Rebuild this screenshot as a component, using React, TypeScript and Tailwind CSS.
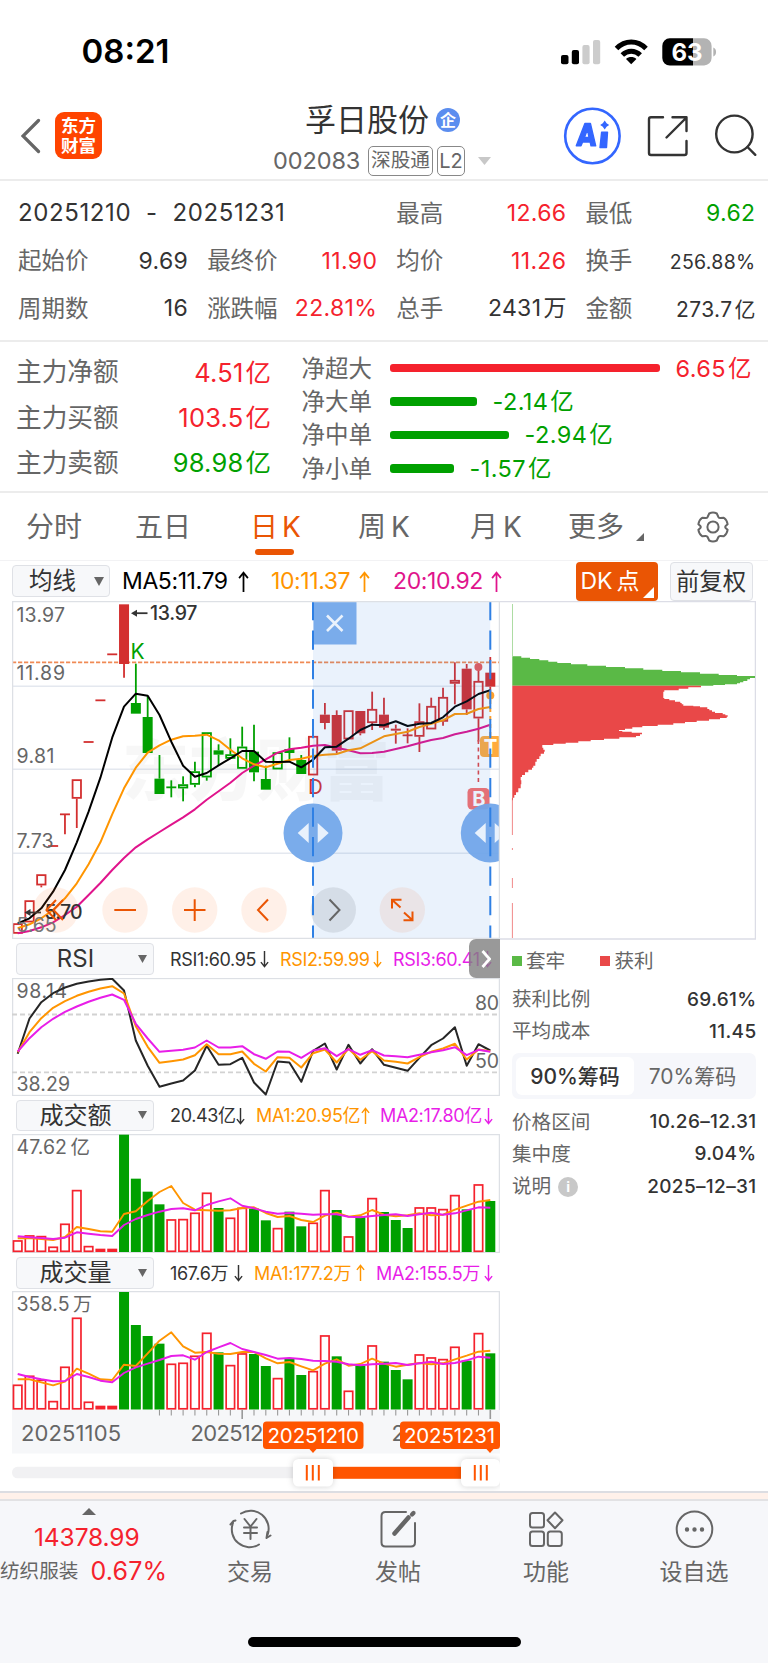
import React from "react";

type Pt = [number, number];

const X0 = 17.7;
const STEP = 11.815;
const cx = (i: number) => X0 + i * STEP;

const line = (ys: number[], top: number) =>
  ys.map((y, i) => `${cx(i).toFixed(1)},${(top + y / 3).toFixed(1)}`).join(" ");

/* kind: f = filled, h = hollow, d = dash; colour: r / g; [kind+colour, top, bottom, wickTop, wickBottom] */
type Candle = [string, number, number, number, number];
const candles: Candle[] = [
  ["hr", 985, 1016, 985, 1016],
  ["hr", 916, 982, 916, 982],
  ["hr", 838, 871, 838, 877],
  ["dr", 753, 753, 753, 753],
  ["dr", 658, 658, 658, 718],
  ["hr", 553, 611, 553, 699],
  ["dr", 441, 441, 441, 441],
  ["dr", 316, 316, 316, 316],
  ["dr", 178, 178, 178, 178],
  ["fr", 28, 207, 28, 248],
  ["fg", 324, 356, 206, 356],
  ["fg", 366, 474, 303, 474],
  ["fg", 551, 597, 480, 597],
  ["dg", 577, 577, 556, 607],
  ["hg", 568, 580, 544, 619],
  ["hg", 529, 569, 500, 577],
  ["hg", 412, 547, 412, 557],
  ["fg", 466, 479, 448, 510],
  ["hg", 478, 491, 430, 491],
  ["hg", 455, 521, 395, 521],
  ["fg", 470, 532, 389, 559],
  ["fg", 552, 584, 512, 584],
  ["hg", 472, 523, 472, 523],
  ["fg", 462, 474, 427, 500],
  ["fg", 495, 537, 480, 537],
  ["hr", 423, 541, 423, 541],
  ["fr", 359, 384, 324, 403],
  ["fr", 360, 467, 346, 475],
  ["hr", 346, 433, 346, 433],
  ["fr", 348, 415, 348, 421],
  ["hr", 342, 384, 290, 405],
  ["fr", 359, 398, 308, 404],
  ["fr", 401, 407, 389, 446],
  ["dr", 421, 421, 400, 445],
  ["hr", 379, 425, 325, 471],
  ["hr", 333, 403, 308, 403],
  ["hr", 306, 380, 278, 392],
  ["hr", 255, 266, 202, 328],
  ["fr", 221, 343, 207, 360],
  ["hr", 258, 370, 215, 440],
  ["fr", 233, 275, 186, 292],
];

const ma5 = [985, 970, 940, 890, 825, 742, 650, 548, 428, 335, 296, 302, 360, 440, 512, 545, 534, 511, 490, 468, 468, 500, 501, 500, 517, 494, 457, 455, 431, 405, 389, 391, 379, 393, 386, 384, 367, 335, 319, 297, 286];
const ma10 = [1000, 988, 970, 945, 910, 865, 808, 742, 658, 580, 518, 473, 451, 434, 424, 422, 419, 436, 464, 490, 508, 517, 506, 495, 491, 483, 479, 477, 466, 460, 442, 424, 417, 410, 396, 386, 376, 357, 356, 342, 336];
const ma20 = [1015, 1008, 997, 982, 960, 935, 900, 864, 825, 789, 757, 733, 711, 689, 667, 643, 614, 589, 563, 534, 512, 493, 473, 463, 458, 452, 450, 458, 466, 475, 474, 470, 462, 454, 444, 435, 429, 418, 410, 401, 389];

const rsi1 = [340, 234, 185, 158, 141, 130, 123, 118, 115, 150, 300, 376, 439, 429, 420, 390, 316, 373, 371, 352, 426, 462, 363, 366, 424, 331, 309, 387, 313, 369, 326, 373, 382, 391, 352, 314, 294, 260, 376, 311, 330];
const rsi2 = [335, 275, 233, 202, 182, 166, 154, 144, 137, 159, 257, 319, 367, 362, 357, 344, 311, 341, 341, 333, 370, 393, 350, 352, 381, 338, 327, 366, 325, 358, 332, 360, 364, 369, 350, 334, 324, 310, 357, 327, 332];
const rsi3 = [333, 293, 260, 235, 214, 198, 184, 172, 162, 178, 250, 294, 334, 331, 328, 321, 300, 321, 321, 317, 341, 355, 333, 334, 352, 330, 323, 347, 326, 343, 329, 345, 347, 350, 343, 335, 329, 320, 344, 328, 334];

const kinds = "rrrrrrrRRggggrrrrgrrggrggrrgrgrgggrrrrgrg";
const amount = [437, 422, 424, 456, 387, 286, 454, 461, 461, 119, 251, 290, 328, 374, 373, 354, 294, 339, 369, 339, 341, 376, 400, 350, 394, 384, 286, 345, 425, 364, 310, 351, 375, 399, 338, 338, 343, 301, 343, 269, 318];
const amountMa1 = [430, 429, 432, 435, 426, 396, 402, 409, 410, 357, 349, 318, 291, 273, 324, 344, 346, 347, 346, 339, 337, 354, 366, 363, 375, 381, 362, 353, 365, 361, 345, 359, 364, 361, 355, 361, 359, 344, 332, 320, 315];
const amountMa2 = [424, 427, 429, 432, 428, 412, 416, 420, 423, 390, 372, 360, 350, 342, 340, 346, 330, 319, 310, 332, 340, 350, 356, 354, 356, 359, 358, 358, 365, 367, 363, 360, 358, 363, 358, 353, 359, 355, 346, 337, 338];
const volume = [390, 363, 375, 439, 336, 189, 441, 452, 452, 111, 210, 243, 266, 327, 324, 303, 234, 292, 331, 296, 297, 333, 370, 309, 360, 349, 242, 304, 408, 331, 272, 320, 345, 373, 299, 308, 313, 276, 317, 235, 295];
const volumeMa1 = [373, 373, 382, 391, 380, 341, 356, 373, 375, 329, 333, 295, 257, 232, 274, 293, 291, 296, 297, 291, 291, 310, 325, 321, 334, 346, 326, 313, 332, 327, 311, 326, 335, 329, 324, 328, 325, 313, 302, 290, 287];
const volumeMa2 = [357, 366, 373, 379, 378, 357, 366, 377, 382, 354, 337, 326, 315, 303, 301, 314, 291, 277, 264, 282, 291, 300, 311, 309, 312, 317, 318, 320, 328, 331, 328, 326, 324, 330, 325, 320, 327, 324, 316, 305, 308];

const trapped: Pt[] = [[64, 184], [90, 188], [118, 192], [145, 196], [172, 200], [213, 204], [262, 208], [318, 212], [375, 216], [430, 220], [487, 224], [543, 228], [600, 232], [656, 236], [711, 240], [765, 243], [765, 246], [750, 249], [742, 253], [730, 258], [720, 262], [711, 265], [675, 268], [640, 270]];
const profit: Pt[] = [[603, 272], [565, 277], [536, 281], [493, 286], [490, 290], [490, 306], [493, 309], [508, 312], [525, 316], [541, 320], [545, 324], [550, 328], [580, 332], [600, 334], [622, 337], [628, 342], [636, 346], [645, 350], [668, 354], [676, 358], [683, 361], [680, 365], [660, 369], [627, 373], [590, 377], [555, 381], [520, 385], [473, 389], [427, 393], [397, 397], [375, 401], [357, 405], [367, 408], [395, 410], [426, 413], [420, 418], [408, 423], [358, 427], [312, 431], [272, 435], [235, 439], [197, 443], [160, 446], [127, 450], [130, 458], [134, 464], [132, 470], [122, 476], [118, 484], [110, 492], [106, 500], [100, 512], [96, 518], [85, 524], [75, 532], [66, 540], [62, 546], [64, 556], [62, 568], [55, 580], [48, 592], [43, 600], [39, 608], [37, 616]];

const steps = (pts: Pt[], startY: number, endY: number) => {
  let d = `M512.3 ${595 + startY / 3}`;
  pts.forEach(([x, y], i) => {
    const next = i < pts.length - 1 ? pts[i + 1][1] : endY;
    d += `L${(500 + x / 3).toFixed(1)} ${(595 + y / 3).toFixed(1)}V${(595 + next / 3).toFixed(1)}`;
  });
  return d + "H512.3Z";
};

function Arrow({ down, className = "" }: { down?: boolean; className?: string }) {
  return (
    <svg viewBox="0 0 10 20" className={`shrink-0 ${className}`} fill="none" stroke="currentColor" strokeWidth="1.6">
      {down ? <path d="M5 1V18.5M1 13.5L5 18.5L9 13.5" /> : <path d="M5 19V1.5M1 6.5L5 1.5L9 6.5" />}
    </svg>
  );
}

function Caret({ className = "" }: { className?: string }) {
  return (
    <svg viewBox="0 0 10 9" preserveAspectRatio="none" className={`shrink-0 ${className}`} fill="currentColor">
      <path d="M0 0H10L5 9Z" />
    </svg>
  );
}

function StatusBar() {
  return (
    <div className="flex h-[100px] items-center justify-between pl-[81.5px] pr-[51px] pt-[3px]">
      <span className="text-[33px] font-semibold tracking-[0px] text-black">08:21</span>
      <svg viewBox="561 36 156 30" className="h-[30px] w-[156px]">
        <rect x="561" y="54" width="7.5" height="9.2" rx="2" fill="#000" />
        <rect x="571.8" y="49" width="7.2" height="14.2" rx="2" fill="#000" />
        <rect x="582.4" y="44" width="7.2" height="19.2" rx="2" fill="#ccc" />
        <rect x="593" y="39" width="7.2" height="24.2" rx="2" fill="#ccc" />
        <g fill="none" stroke="#000" strokeWidth="5">
          <path d="M616.5 47.5C625 38.8 637.5 38.8 646 47.5" />
          <path d="M622.3 54C627.5 48.9 635 48.9 640.2 54" />
        </g>
        <path d="M631.2 63.3L626 58C628.8 55.4 633.6 55.4 636.4 58Z" fill="#000" />
        <path d="M670 37.3H693V64.5H670A7.5 7.5 0 0 1 662.3 57V45A7.5 7.5 0 0 1 670 37.3Z" fill="#000" />
        <path d="M693 37.3H704A7.5 7.5 0 0 1 711.6 45V57A7.5 7.5 0 0 1 704 64.5H693Z" fill="#b3b3b3" />
        <path d="M713.3 46.5C717 48 717 54 713.3 55.5Z" fill="#b3b3b3" />
        <text x="687" y="60" textAnchor="middle" fontSize="24" fontWeight="700" fill="#fff" textLength="31">63</text>
      </svg>
    </div>
  );
}

function Header() {
  return (
    <div className="flex h-[81px] items-start border-b-2 border-[#ececec]">
      <svg viewBox="0 0 20 36" className="ml-[21px] mt-[18px] h-[36px] w-[20px]" fill="none" stroke="#666" strokeWidth="3.2" strokeLinecap="round">
        <path d="M17.5 2.5L2 18L17.5 33.5" />
      </svg>
      <div className="ml-[14px] mt-[12px] flex h-[47px] w-[47px] shrink-0 flex-col items-center justify-center rounded-[9px] bg-[#ff4400] text-[17.5px] font-bold leading-[20px] text-white">
        <span>东方</span>
        <span>财富</span>
      </div>
      <div className="ml-[171px] flex w-[218px] shrink-0 flex-col">
        <div className="ml-[32px] mt-[1px] flex h-[37px] items-center whitespace-nowrap">
          <span className="text-[31px] leading-[37px] text-[#333]">孚日股份</span>
          <span className="ml-[7px] mt-[1px] flex size-[24px] shrink-0 items-center justify-center rounded-full bg-[#5b8def] text-[16px] font-bold text-white">企</span>
        </div>
        <div className="mt-[8px] flex h-[30px] w-[218px] items-center text-[#666]">
          <span className="w-[95px] shrink-0 text-[23.5px] tracking-[-0.1px]">002083</span>
          <span className="flex h-[30px] w-[65px] shrink-0 items-center justify-center rounded-[5px] border-[1.5px] border-[#888] text-[19.7px]">深股通</span>
          <span className="ml-[4px] flex h-[30px] w-[28px] shrink-0 items-center justify-center rounded-[5px] border-[1.5px] border-[#888] text-[20px]">L2</span>
          <Caret className="ml-[13px] h-[8px] w-[13px] text-[#c8c8c8]" />
        </div>
      </div>
      <svg viewBox="560 104 208 64" className="ml-[69px] mt-[4px] h-[64px] w-[208px] shrink-0" fill="none">
        <circle cx="592.4" cy="136" r="27.2" stroke="#3366ff" strokeWidth="2.6" />
        <path d="M584.9 123.4H590.4L595.7 145.8H591L590.2 142H582.6L581 145.8H576.3ZM584.4 137.4H589L587.5 129.500Z" fill="#3366ff" fillRule="evenodd" stroke="#3366ff" strokeWidth="1.4" strokeLinejoin="round" />
        <path d="M601.600 132.300H607.500L606.500 147.500H600Z" fill="#3366ff" stroke="#3366ff" strokeWidth="1.400" strokeLinejoin="round" />
        <path d="M604.700 120.500L606.600 123.200L609.200 125L606.600 126.800L604.700 129.500L602.800 126.800L600.200 125L602.800 123.200Z" fill="#3366ff" />
        <g stroke="#333" strokeWidth="2.4" strokeLinecap="round" strokeLinejoin="round">
          <path d="M663 117.3H651Q649 117.3 649 119.3V153Q649 155 651 155H684.5Q686.5 155 686.5 153V141" />
          <path d="M666.5 137.5L686 118M672.5 117.3H686.5V131" />
          <ellipse cx="734.4" cy="134" rx="18.2" ry="18.4" />
          <path d="M747.500 147L755.300 154.800" />
        </g>
      </svg>
    </div>
  );
}

function Value({ value, className }: { value: string; className: string }) {
  const unit = /[万亿]$/.test(value) ? value.slice(-1) : "";
  return (
    <span className={`whitespace-nowrap ${className}`}>
      {unit ? value.slice(0, -1) : value}
      {unit && <span className="ml-[2px] tracking-normal">{unit}</span>}
    </span>
  );
}

function Stat({ label, value, tone = "text-[#333]", size = "text-[23px] tracking-[0.35px]" }: { label: string; value: string; tone?: string; size?: string }) {
  return (
    <div className="flex h-[47.500px] items-center justify-between whitespace-nowrap">
      <span className="text-[23.500px] text-[#666]">{label}</span>
      <Value value={value} className={`${size} ${tone}`} />
    </div>
  );
}

function Stats() {
  return (
    <div className="grid h-[161px] grid-cols-4 content-start gap-x-[19px] border-b-2 border-[#ececec] pl-[18px] pr-[12.5px] pt-[8.5px]">
      <div className="col-span-2 flex h-[47.500px] items-center whitespace-pre text-[24px] tracking-[0.62px] text-[#333]">20251210  -  20251231</div>
      <Stat label="最高" value="12.66" tone="text-[#f5222d]" />
      <Stat label="最低" value="9.62" tone="text-[#00a000]" />
      <Stat label="起始价" value="9.69" />
      <Stat label="最终价" value="11.90" tone="text-[#f5222d]" />
      <Stat label="均价" value="11.26" tone="text-[#f5222d]" />
      <Stat label="换手" value="256.88%" size="text-[19.5px] tracking-[0.3px] pt-[3px]" />
      <Stat label="周期数" value="16" />
      <Stat label="涨跌幅" value="22.81%" tone="text-[#f5222d]" />
      <Stat label="总手" value="2431万" />
      <Stat label="金额" value="273.7亿" size="text-[21px] tracking-[0.4px] pt-[3px]" />
    </div>
  );
}

const flows = [
  { label: "净超大", value: "6.65亿", bar: "w-[270px] bg-[#f5222d]", tone: "text-[#f5222d]" },
  { label: "净大单", value: "-2.14亿", bar: "w-[87px] bg-[#00a000]", tone: "text-[#00a000]" },
  { label: "净中单", value: "-2.94亿", bar: "w-[119px] bg-[#00a000]", tone: "text-[#00a000]" },
  { label: "净小单", value: "-1.57亿", bar: "w-[64px] bg-[#00a000]", tone: "text-[#00a000]" },
];

function MoneyFlow() {
  const left = [
    ["主力净额", "4.51亿", "text-[#f5222d]"],
    ["主力买额", "103.5亿", "text-[#f5222d]"],
    ["主力卖额", "98.98亿", "text-[#00a000]"],
  ];
  return (
    <div className="flex h-[151px] border-b-2 border-[#ececec] pl-[16px]">
      <div className="w-[255px] shrink-0 pt-[8px]">
        {left.map(([l, v, t]) => (
          <div key={l} className="flex h-[45.300px] items-center justify-between">
            <span className="text-[25.700px] text-[#666]">{l}</span>
            <Value value={v} className={`text-[25.500px] tracking-[0.200px] ${t}`} />
          </div>
        ))}
      </div>
      <div className="ml-[30.500px] shrink-0 pt-[9.500px]">
        {flows.map((f) => (
          <div key={f.label} className="flex h-[33.400px] items-center whitespace-nowrap">
            <span className="w-[88px] text-[23.500px] text-[#666]">{f.label}</span>
            <span className={`h-[8.500px] shrink-0 rounded-[3px] ${f.bar}`} />
            <Value value={f.value} className={`ml-[16px] text-[23.500px] tracking-[0.400px] ${f.tone}`} />
          </div>
        ))}
      </div>
    </div>
  );
}

function Tabs() {
  return (
    <div className="flex h-[68px] items-center border-b border-[#f2f2f4] text-[28px] text-[#666]">
      <span className="ml-[26px] w-[109px]">分时</span>
      <span className="w-[115px]">五日</span>
      <div className="relative flex h-full w-[108px] items-center text-[#ea5504]">
        日<span className="ml-[4px]">K</span>
        <span className="absolute bottom-[5px] left-[5px] h-[6px] w-[39px] rounded-[3px] bg-[#ea5504]" />
      </div>
      <span className="w-[112px]">周<span className="ml-[5px]">K</span></span>
      <span className="w-[98px]">月<span className="ml-[5px]">K</span></span>
      <span>更多</span>
      <svg viewBox="0 0 8 8" className="ml-[12px] mt-[20px] size-[8px]" fill="#666"><path d="M8 0V8H0Z" /></svg>
      <svg viewBox="0 0 32 32" className="ml-[53px] size-[32px]" fill="none" stroke="#666" strokeWidth="2" strokeLinejoin="round">
        <path d="M12.2 2.5Q16 0.6 19.8 2.5L21.4 6Q22 7.2 23.4 7.1L26.8 6.8Q30 9 30.6 13.2L28.6 15Q27.9 16 28.6 17L30.6 18.8Q30 23 26.8 25.2L23.4 24.9Q22 24.8 21.4 26L19.8 29.5Q16 31.4 12.2 29.5L10.6 26Q10 24.8 8.6 24.9L5.2 25.2Q2 23 1.4 18.8L3.4 17Q4.1 16 3.4 15L1.4 13.2Q2 9 5.2 6.8L8.6 7.1Q10 7.2 10.6 6Z" />
        <circle cx="16" cy="16" r="5.6" />
      </svg>
    </div>
  );
}

function MaRow() {
  return (
    <div className="flex h-[40px] items-center whitespace-nowrap pl-[12px]">
      <div className="flex h-[32px] w-[98px] shrink-0 items-center rounded-[4px] border-[1.5px] border-[#dfe1e6] bg-[#f7f8fa] pl-[16px] text-[23.5px] text-[#333]">
        均线<Caret className="ml-[18px] h-[9px] w-[10px] text-[#666]" />
      </div>
      <div className="ml-[12px] flex w-[149px] shrink-0 items-center pt-[1px] text-[23px] tracking-[-0.4px] text-black">
        <span className="w-[116px]">MA5:11.79</span><Arrow className="h-[22px] w-[11px]" />
      </div>
      <div className="flex w-[122px] shrink-0 items-center pt-[1px] text-[23px] tracking-[-0.4px] text-[#ff9500]">
        <span className="w-[88px]">10:11.37</span><Arrow className="h-[22px] w-[11px]" />
      </div>
      <div className="flex w-[182.500px] shrink-0 items-center pt-[1px] text-[23px] tracking-[-0.4px] text-[#e0148c]">
        <span className="w-[98px]">20:10.92</span><Arrow className="h-[22px] w-[11px]" />
      </div>
      <div className="relative flex h-[39px] w-[82px] shrink-0 items-center rounded-[4px] bg-[#ea5504] pl-[5px] pt-[1px] text-[23px] text-white">
        DK<span className="ml-[4px]">点</span>
        <svg viewBox="0 0 10 10" className="absolute bottom-[3px] right-[4px] size-[11px]" fill="#fff"><path d="M10 0V10H0Z" /></svg>
      </div>
      <div className="ml-[12px] flex h-[39px] w-[83px] shrink-0 items-center justify-center rounded-[4px] border-[1.5px] border-[#dfe1e6] bg-[#f7f8fa] pt-[1px] text-[23.4px] text-[#333]">前复权</div>
    </div>
  );
}

function MainChart() {
  return (
    <svg viewBox="12 601 488 338" className="block h-[338px] w-[488px]">
      <g stroke="#e4e8ef" strokeWidth="1.4">
        <path d="M12 686.2H500M12 769.3H500M12 853.3H500" />
      </g>
      <text x="122" y="795" fontSize="67" fontWeight="900" fill="#000" opacity="0.028" textLength="268">东方财富</text>
      <path d="M12 662.3H500" stroke="#f08a55" strokeWidth="1.8" strokeDasharray="4.2 1.8" />
      {candles.map(([k, t, b, wt, wb], i) => {
        const c = k[1] === "r" ? "#d32f2f" : "#00a000";
        const x = cx(i);
        const Y = (v: number) => 595 + v / 3;
        return (
          <g key={i} stroke={c} strokeWidth="1.8" fill="none">
            {wt < t && <path d={`M${x} ${Y(wt)}V${Y(t)}`} />}
            {wb > b && <path d={`M${x} ${Y(b)}V${Y(wb)}`} />}
            {k[0] === "d" && <path d={`M${x - 5} ${Y(t)}H${x + 5}`} />}
            {k[0] === "h" && <rect x={x - 4.2} y={Y(t) + 0.8} width="8.4" height={Y(b) - Y(t) - 1.6} />}
            {k[0] === "f" && <rect x={x - 5} y={Y(t)} width="10" height={Y(b) - Y(t)} fill={c} stroke="none" />}
          </g>
        );
      })}
      <g fill="none" strokeWidth="2" strokeLinejoin="round">
        <polyline points={line(ma20, 595)} stroke="#e0148c" />
        <polyline points={line(ma10, 595)} stroke="#ff9500" />
        <polyline points={line(ma5, 595)} stroke="#000" />
      </g>
      <path d="M478.4 740V784" stroke="#e04545" strokeWidth="1.6" strokeDasharray="4 3.6" />
      <circle cx="478.4" cy="667" r="4" fill="#e85a5a" />
      <circle cx="490.3" cy="695.5" r="4" fill="#ff9f2a" />
      <path d="M490.3 700V736" stroke="#ff9f2a" strokeWidth="2" strokeDasharray="4 4" />
      <rect x="480" y="736" width="22" height="21" rx="4" fill="#ffab3d" />
      <text x="490.5" y="753.5" fontSize="20" fontWeight="800" fill="#fff" textAnchor="middle">T</text>
      <rect x="467.5" y="788" width="22" height="21.5" rx="4.5" fill="#f9706c" />
      <text x="478.8" y="806" fontSize="20" fontWeight="700" fill="#fff" textAnchor="middle">B</text>
      <text x="308" y="794" fontSize="20.500" fill="#d32f2f" textLength="14.500">D</text>
      <text x="130.500" y="658.800" fontSize="21" fill="#00a000">K</text>

      <g fill="#666" fontSize="19.5">
        <text x="16.5" y="622.3" textLength="48.5">13.97</text>
        <text x="16.5" y="679.8" textLength="48.5">11.89</text>
        <text x="16.5" y="763.3" textLength="38">9.81</text>
        <text x="16.5" y="848" textLength="37">7.73</text>
      </g>
      <g fill="#333" stroke="#333">
        <path d="M133 613.2H147.5" strokeWidth="1.8" />
        <path d="M131 613.2L137 609.7V616.7Z" strokeWidth="0" />
        <path d="M27 912.5H41" strokeWidth="1.8" />
        <path d="M24.5 912.5L30.5 909V916Z" strokeWidth="0" />
      </g>
      <text x="150" y="620.300" fontSize="19.500" fontWeight="500" fill="#333" textLength="47.500">13.97</text>

      <g fill="#ff7a2e" fillOpacity="0.11">
        {[55.7, 125, 194.7, 264, 402.3].map((x) => <circle key={x} cx={x} cy="910" r="22.7" />)}
      </g>
      <circle cx="333.3" cy="910" r="22.7" fill="#000" fillOpacity="0.09" />
      <text x="16.5" y="932" fontSize="19.5" fill="#777" textLength="40">5.65</text>
      <text x="44.500" y="919" fontSize="19.500" fontWeight="500" fill="#333" textLength="38">5.70</text>

      <rect x="313" y="601" width="177.3" height="338" fill="#2f80e0" fillOpacity="0.1" />
      <g stroke="#ea5504" strokeWidth="2" fill="none">
        <path d="M56 900L46.5 910L56 920M63 900L53.500 910L63 920" />
        <path d="M114.300 910H136" />
        <path d="M184 910H205.500M194.700 899.300V921" />
        <path d="M268 899.500L258 910L268 920.500" />
        <path d="M392 908.500V899.700H401.500M392.500 900.200L400.500 907.500M412.500 911.500V920.300H403.500M412 919.800L404 912.500" />
      </g>
      <path d="M329.500 899.500L339.500 910L329.500 920.500" stroke="#666" strokeWidth="2" fill="none" />
      <rect x="313.500" y="601" width="43" height="43.500" fill="#7aaceb" />
      <path d="M327 615.500L342.500 631M342.500 615.500L327 631" stroke="#eaf2fc" strokeWidth="2.600" />
      <circle cx="313" cy="833" r="29.500" fill="#7aaceb" />
      <circle cx="490.300" cy="833" r="29.500" fill="#6fa5ea" fillOpacity="0.93" />
      <g fill="#e8f1fc">
        <path d="M297.700 833L308.700 823V843ZM328.700 833L317.700 823V843Z" />
        <path d="M474.700 833L485.700 823V843ZM505.700 833L494.700 823V843Z" />
      </g>
      <path d="M313 601V939M490.300 601V939" stroke="#2f80e4" strokeWidth="2" strokeDasharray="19.300 10.200" />
      <rect x="12.600" y="601.600" width="486.800" height="336.800" fill="none" stroke="#dde0e5" strokeWidth="1.300" />
    </svg>
  );
}

type Reading = { text: string; tone: string; down?: boolean; w: string; tw: string };

function IndicatorHead({ name, items, pad }: { name: string; items: Reading[]; pad: string }) {
  return (
    <div className={`flex w-[488px] items-center whitespace-nowrap pl-[4px] ${pad}`}>
      <div className="flex h-[31.500px] w-[138px] shrink-0 items-center rounded-[4px] border-[1.500px] border-[#dfe1e6] bg-[#f7f8fa] text-[24px] text-[#333]">
        <span className="w-[121px] pr-[4px] pt-[1px] text-center">{name}</span>
        <Caret className="h-[8px] w-[9px] text-[#666]" />
      </div>
      <div className="ml-[16px] flex pt-[1px]">
        {items.map((it) => (
          <div key={it.text} className={`flex shrink-0 items-center text-[18px] tracking-[-0.350px] ${it.tone} ${it.w}`}>
            <span className={`shrink-0 ${it.tw}`}>{it.text}</span>
            <Arrow down={it.down} className="h-[18px] w-[9px]" />
          </div>
        ))}
      </div>
    </div>
  );
}

function Bars({ tops, base, m1, m2, top }: { tops: number[]; base: number; m1: number[]; m2: number[]; top: number }) {
  return (
    <>
      {tops.map((t, i) => {
        const y = top + t / 3;
        const k = kinds[i];
        return k === "r" ? (
          <rect key={i} x={cx(i) - 4.2} y={y + 0.3} width="8.4" height={base - y - 1} fill="#fff" stroke="#f5222d" strokeWidth="1.7" />
        ) : (
          <rect key={i} x={cx(i) - 5} y={y} width="10" height={base - y} fill={k === "g" ? "#00a000" : "#f5222d"} />
        );
      })}
      <g fill="none" strokeWidth="1.9" strokeLinejoin="round">
        <polyline points={line(m1, top)} stroke="#ff9500" />
        <polyline points={line(m2, top)} stroke="#e81ee8" />
      </g>
    </>
  );
}

function Indicators() {
  return (
    <>
      <div className="relative h-[38.500px]">
        <IndicatorHead
          name="RSI"
          pad="pt-[4px]"
          items={[
            { text: "RSI1:60.95", tone: "text-[#333]", down: true, w: "w-[110px]", tw: "w-[90px]" },
            { text: "RSI2:59.99", tone: "text-[#ff9500]", down: true, w: "w-[113px]", tw: "w-[93px]" },
            { text: "RSI3:60.41", tone: "text-[#e81ee8]", down: true, w: "w-[100px]", tw: "w-[90px]" },
          ]}
        />
        <div className="absolute right-0 top-0 flex h-[39px] w-[31px] items-center justify-center rounded-l-[7px] bg-[#808080]/80">
          <svg viewBox="0 0 10 18" className="ml-[3px] h-[18px] w-[10px]" fill="none" stroke="#fff" strokeWidth="2.8"><path d="M1.500 1L8.500 9L1.500 17" /></svg>
        </div>
      </div>
      <svg viewBox="12 977.5 488 118" className="block h-[118px] w-[488px]">
        <rect x="12.600" y="978" width="486.800" height="117" fill="none" stroke="#dde0e5" strokeWidth="1.300" />
        <path d="M12 1014H499M12 1071.800H499" stroke="#d2d2d2" strokeWidth="1.800" strokeDasharray="5 3" />
        <g fill="#666" fontSize="19.500">
          <text x="16.500" y="997" textLength="50.500">98.14</text>
          <text x="16.500" y="1090.500" textLength="53.500">38.29</text>
          <text x="475" y="1009.500" textLength="24">80</text>
          <text x="475" y="1067" textLength="24">50</text>
        </g>
        <g fill="none" strokeWidth="2" strokeLinejoin="round">
          <polyline points={line(rsi1, 940)} stroke="#262626" />
          <polyline points={line(rsi2, 940)} stroke="#ff9500" />
          <polyline points={line(rsi3, 940)} stroke="#e81ee8" />
        </g>
      </svg>
      <div className="h-[38.500px]">
        <IndicatorHead
          name="成交额"
          pad="pt-[4px]"
          items={[
            { text: "20.43亿", tone: "text-[#333]", down: true, w: "w-[86px]", tw: "w-[66px]" },
            { text: "MA1:20.95亿", tone: "text-[#ff9500]", w: "w-[124px]", tw: "w-[104.500px]" },
            { text: "MA2:17.80亿", tone: "text-[#e81ee8]", down: true, w: "w-[115px]", tw: "w-[104px]" },
          ]}
        />
      </div>
      <svg viewBox="12 1134 488 119" className="block h-[119px] w-[488px]">
        <rect x="12.600" y="1134.600" width="486.800" height="117.800" fill="none" stroke="#dde0e5" strokeWidth="1.300" />
        <text x="16.500" y="1154.300" fontSize="19.500" fill="#666" textLength="50.500">47.62</text>
        <text x="70.500" y="1154.300" fontSize="19.500" fill="#666">亿</text>
        <Bars tops={amount} base={1252} m1={amountMa1} m2={amountMa2} top={1095} />
      </svg>
      <div className="h-[38px]">
        <IndicatorHead
          name="成交量"
          pad="pt-[4px]"
          items={[
            { text: "167.6万", tone: "text-[#333]", down: true, w: "w-[84px]", tw: "w-[64px]" },
            { text: "MA1:177.2万", tone: "text-[#ff9500]", w: "w-[122px]", tw: "w-[102px]" },
            { text: "MA2:155.5万", tone: "text-[#e81ee8]", down: true, w: "w-[119px]", tw: "w-[108px]" },
          ]}
        />
      </div>
      <svg viewBox="12 1291 488 200" className="block h-[200px] w-[488px]">
        <rect x="12" y="1410" width="488" height="43.500" fill="#f6f7f9" />
        <path d="M12.600 1410V1291.600H499.400V1410" fill="none" stroke="#dde0e5" strokeWidth="1.300" />
        <text x="16.500" y="1311.300" fontSize="19.500" fill="#666" textLength="53">358.5</text>
        <text x="73" y="1311.300" fontSize="19" fill="#666">万</text>
        <Bars tops={volume} base={1409.500} m1={volumeMa1} m2={volumeMa2} top={1255} />
        {Array.from({ length: 29 }, (_, n) => n + 12).map((i) => (
          <path key={i} d={`M${cx(i)} 1409.500V${i === 19 || i === 40 ? 1419 : 1415.500}`} stroke="#999" strokeWidth={i === 19 || i === 40 ? 1.6 : 1.1} />
        ))}
        <g fill="#666" fontSize="22">
          <text x="21" y="1441" textLength="100">20251105</text>
          <text x="190.500" y="1441" textLength="73">202512</text>
          <text x="391.500" y="1441" textLength="10">2</text>
        </g>
        <g fill="#ff5500">
          <rect x="263" y="1421.500" width="100.500" height="27.500" rx="3.500" />
          <path d="M309 1448.500H317L313 1453Z" />
          <rect x="400" y="1421.500" width="100" height="27.500" rx="3.500" />
          <path d="M486 1448.500H494L490 1453Z" />
        </g>
        <g fill="#fff" fontSize="20.500">
          <text x="267.500" y="1442.800" textLength="91.500">20251210</text>
          <text x="404" y="1442.800" textLength="91">20251231</text>
        </g>
        <rect x="12" y="1466.800" width="300" height="11.500" rx="5.500" fill="#f1f1f3" />
        <rect x="320" y="1466.800" width="150" height="12" fill="#ff5500" />
        {[293, 461].map((x, i) => (
          <g key={x}>
            <rect x={x} y="1459" width={i ? 39 : 40} height="27.500" rx="5.500" fill="#fff" className="drop-shadow-[0_0_3px_rgba(0,0,0,0.18)]" />
            <path d={`M${x + 13.8} 1465V1480.500M${x + 19.8} 1465V1480.500M${x + 25.8} 1465V1480.500`} stroke="#ff5500" strokeWidth="2" />
          </g>
        ))}
      </svg>
    </>
  );
}

function InfoRow({ label, value, h, info }: { label: string; value: string; h: string; info?: boolean }) {
  return (
    <div className={`flex items-center justify-between pt-[1px] ${h}`}>
      <span className="flex items-center text-[19.600px] text-[#666]">
        {label}
        {info && <span className="ml-[7px] flex size-[20px] items-center justify-center rounded-full bg-[#c8c8c8] text-[14px] font-bold text-white">i</span>}
      </span>
      <span className="-mr-[0.500px] text-[19px] font-medium tracking-[0.350px] text-[#333]">{value}</span>
    </div>
  );
}

function ChipPanel() {
  return (
    <div className="ml-[12px] w-[244px]">
      <svg viewBox="500 601 256 339" className="-ml-[12px] block h-[339px] w-[256px] max-w-none">
        <path d="M500 601.600H755.400V939H500" fill="none" stroke="#dcdde6" strokeWidth="1.300" />
        <path d="M512.400 604V656" stroke="#5ab946" strokeWidth="0.800" opacity="0.700" />
        <path d="M512.400 798V835M512.400 848V850M512.400 878V888M512.400 903V938" stroke="#e94545" strokeWidth="0.900" opacity="0.700" />
        <path d={steps(trapped, 184, 272)} fill="#5ab946" />
        <path d={steps(profit, 272, 618)} fill="#e94848" />
      </svg>
      <div className="flex h-[42px] items-center text-[19.600px] text-[#666]">
        <span className="mr-[4px] size-[10px] bg-[#5ab946]" />
        <span className="w-[73.500px] pt-[1px]">套牢</span>
        <span className="mr-[5px] size-[10px] bg-[#e94848]" />
        <span className="pt-[1px]">获利</span>
      </div>
      <InfoRow label="获利比例" value="69.61%" h="h-[35px]" />
      <InfoRow label="平均成本" value="11.45" h="h-[29px]" />
      <div className="mb-[7px] mt-[7px] flex h-[46px] rounded-[7px] bg-[#f6f7fb] p-[4px] text-[21px]">
        <span className="flex w-[118px] items-center justify-center rounded-[6px] bg-white pt-[1px] font-medium text-[#333]">90%筹码</span>
        <span className="flex w-[117px] items-center justify-center pt-[1px] text-[#666]">70%筹码</span>
      </div>
      <InfoRow label="价格区间" value="10.26–12.31" h="h-[32px]" />
      <InfoRow label="集中度" value="9.04%" h="h-[32px]" />
      <InfoRow label="说明" value="2025–12–31" h="h-[33px]" info />
    </div>
  );
}

function BottomNav() {
  const items: { label: string; icon: React.ReactNode }[] = [
    {
      label: "交易",
      icon: (
        <>
          <path d="M12 5.500A18 18 0 0 1 38.500 27M30 36.500A17.800 17.800 0 0 1 4 15" />
          <path d="M1.500 16.500L4.500 13L6.500 12.500M41.500 27.500L37.500 30L38.500 24" />
          <path d="M15.500 11L21.500 18.500L27.500 11M21.500 18.500V31M15 19.500H28M15 25H28" />
        </>
      ),
    },
    {
      label: "发帖",
      icon: (
        <>
          <path d="M29 4H8.500Q4.500 4 4.500 8V34.500Q4.500 38.500 8.500 38.500H34Q38 38.500 38 34.500V15" />
          <path d="M17.500 25.500L31.500 9.500" strokeWidth="4.500" />
          <path d="M35 6.500L36.500 5" strokeWidth="4.200" />
        </>
      ),
    },
    {
      label: "功能",
      icon: (
        <>
          <rect x="5" y="5" width="14" height="14.500" rx="2.500" />
          <rect x="5" y="23.500" width="14" height="14.500" rx="2.500" />
          <rect x="22.800" y="23.500" width="14" height="14.500" rx="2.500" />
          <path d="M30 4.500L37.500 12.300L30 20.200L22.500 12.300Z" />
        </>
      ),
    },
    {
      label: "设自选",
      icon: (
        <>
          <circle cx="21.500" cy="21.300" r="17.800" />
          <path d="M14 21.500H14.010M21.500 21.500H21.510M29 21.500H29.010" strokeWidth="4.400" />
        </>
      ),
    },
  ];
  return (
    <div className="h-[172px] border-t-2 border-[#e2e2e4] bg-[#f6f7fa]">
      <div className="flex h-[128px]">
        <div className="flex w-[176px] shrink-0 flex-col items-start whitespace-nowrap text-[#f5222d]">
          <svg viewBox="0 0 14 7" className="ml-[82px] mt-[7px] h-[7px] w-[14px]" fill="#666"><path d="M7 0L14 7H0Z" /></svg>
          <span className="ml-[34px] mt-[5px] h-[34px] text-[24.500px] leading-[34px] tracking-[-0.100px]">14378.99</span>
          <div className="flex h-[35px] items-center">
            <span className="w-[90.500px] text-[19.600px] text-[#666]">纺织服装</span>
            <span className="text-[25px] tracking-[0.150px]">0.67%</span>
          </div>
        </div>
        {items.map((it) => (
          <div key={it.label} className="flex w-[148px] flex-col items-center">
            <svg viewBox="0 0 43 43" className="mt-[7px] size-[43px]" fill="none" stroke="#666" strokeWidth="2" strokeLinecap="round" strokeLinejoin="round">{it.icon}</svg>
            <span className="mt-[2.500px] text-[23px] leading-[36px] text-[#666]">{it.label}</span>
          </div>
        ))}
      </div>
      <div className="ml-[247.500px] mt-[8px] h-[10px] w-[273.500px] rounded-full bg-black" />
    </div>
  );
}

export default function App() {
  return (
    <div className="h-[1663px] w-[768px] overflow-hidden bg-white font-['Inter','Noto_Sans_CJK_SC',sans-serif]">
      <StatusBar />
      <Header />
      <Stats />
      <MoneyFlow />
      <Tabs />
      <MaRow />
      <div className="flex h-[890px] pl-[12px]">
        <div className="w-[488px] shrink-0">
          <MainChart />
          <Indicators />
        </div>
        <ChipPanel />
      </div>
      <div className="h-[8px] border-t-2 border-[#dcdde2] bg-[#fff1ea]" />
      <BottomNav />
    </div>
  );
}
